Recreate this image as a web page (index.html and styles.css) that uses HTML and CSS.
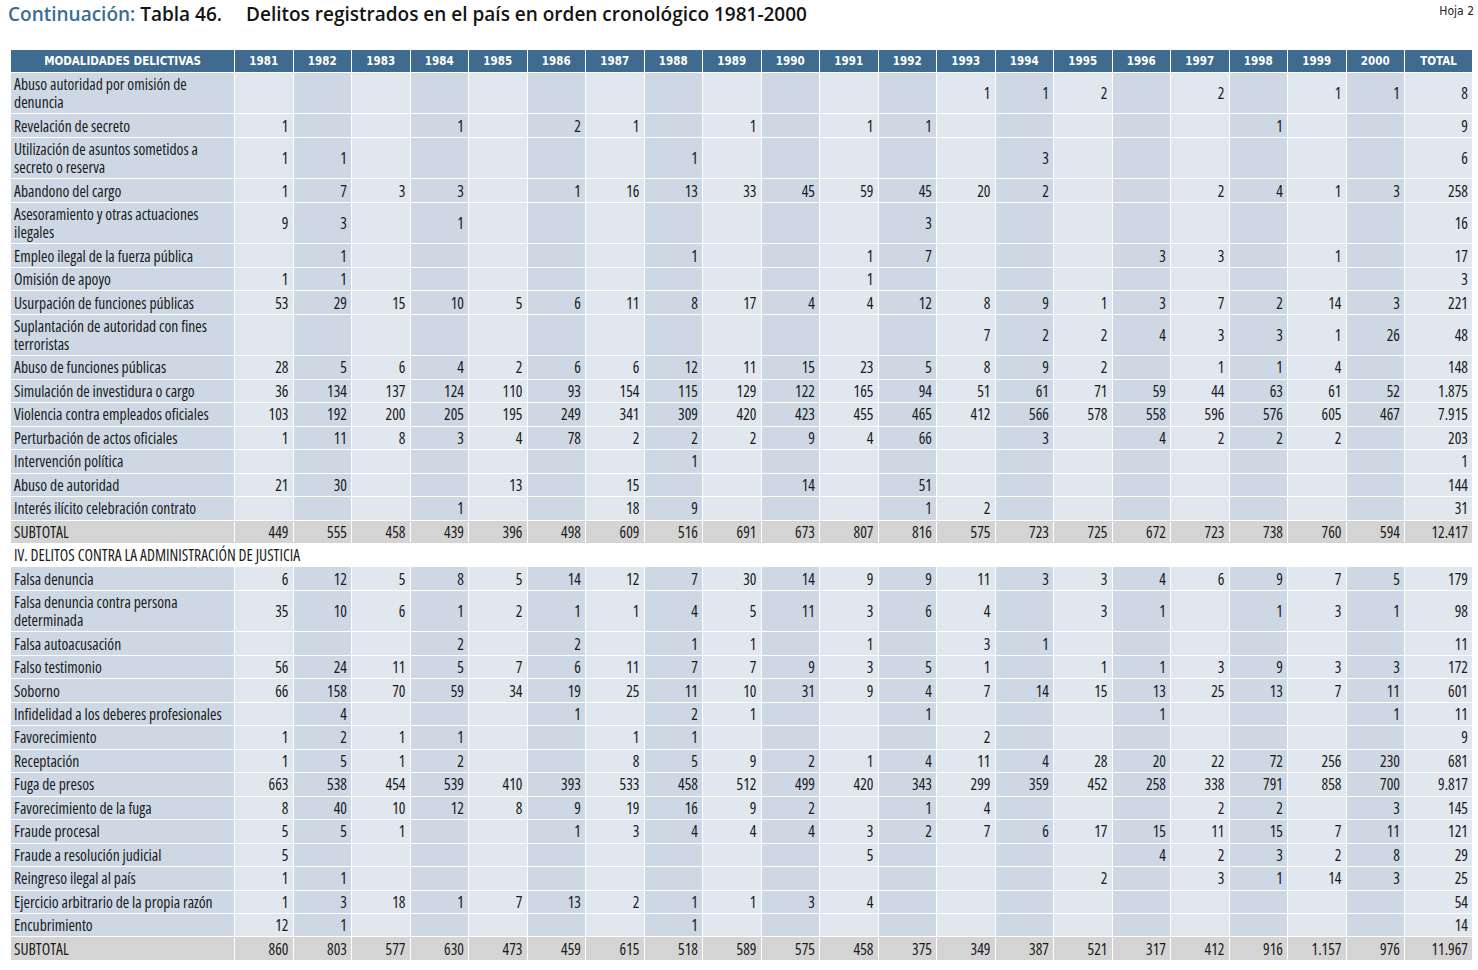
FILE: index.html
```html
<!DOCTYPE html>
<html lang="es">
<head>
<meta charset="utf-8">
<title>Tabla 46</title>
<link rel="stylesheet" href="styles.css">
</head>
<body>
<div class="top">
  <h1 class="title"><span class="cont">Continuación:</span> Tabla 46.<span class="gap"></span>Delitos registrados en el país en orden cronológico 1981-2000</h1>
  <div class="hoja">Hoja 2</div>
</div>
<table class="data">
  <colgroup>
    <col class="c-lbl"><col class="c-l"><col class="c-d"><col class="c-l"><col class="c-d"><col class="c-l"><col class="c-d"><col class="c-l"><col class="c-d"><col class="c-l"><col class="c-d"><col class="c-l"><col class="c-d"><col class="c-l"><col class="c-d"><col class="c-l"><col class="c-d"><col class="c-l"><col class="c-d"><col class="c-l"><col class="c-d"><col class="c-tot">
  </colgroup>
  <thead>
    <tr class="head"><th>MODALIDADES DELICTIVAS</th><th>1981</th><th>1982</th><th>1983</th><th>1984</th><th>1985</th><th>1986</th><th>1987</th><th>1988</th><th>1989</th><th>1990</th><th>1991</th><th>1992</th><th>1993</th><th>1994</th><th>1995</th><th>1996</th><th>1997</th><th>1998</th><th>1999</th><th>2000</th><th>TOTAL</th></tr>
  </thead>
  <tbody>
    <tr><td class="lbl">Abuso autoridad por omisión de denuncia</td><td></td><td></td><td></td><td></td><td></td><td></td><td></td><td></td><td></td><td></td><td></td><td></td><td>1</td><td>1</td><td>2</td><td></td><td>2</td><td></td><td>1</td><td>1</td><td>8</td></tr>
    <tr><td class="lbl">Revelación de secreto</td><td>1</td><td></td><td></td><td>1</td><td></td><td>2</td><td>1</td><td></td><td>1</td><td></td><td>1</td><td>1</td><td></td><td></td><td></td><td></td><td></td><td>1</td><td></td><td></td><td>9</td></tr>
    <tr><td class="lbl">Utilización de asuntos sometidos a secreto o reserva</td><td>1</td><td>1</td><td></td><td></td><td></td><td></td><td></td><td>1</td><td></td><td></td><td></td><td></td><td></td><td>3</td><td></td><td></td><td></td><td></td><td></td><td></td><td>6</td></tr>
    <tr><td class="lbl">Abandono del cargo</td><td>1</td><td>7</td><td>3</td><td>3</td><td></td><td>1</td><td>16</td><td>13</td><td>33</td><td>45</td><td>59</td><td>45</td><td>20</td><td>2</td><td></td><td></td><td>2</td><td>4</td><td>1</td><td>3</td><td>258</td></tr>
    <tr><td class="lbl">Asesoramiento y otras actuaciones ilegales</td><td>9</td><td>3</td><td></td><td>1</td><td></td><td></td><td></td><td></td><td></td><td></td><td></td><td>3</td><td></td><td></td><td></td><td></td><td></td><td></td><td></td><td></td><td>16</td></tr>
    <tr><td class="lbl">Empleo ilegal de la fuerza pública</td><td></td><td>1</td><td></td><td></td><td></td><td></td><td></td><td>1</td><td></td><td></td><td>1</td><td>7</td><td></td><td></td><td></td><td>3</td><td>3</td><td></td><td>1</td><td></td><td>17</td></tr>
    <tr><td class="lbl">Omisión de apoyo</td><td>1</td><td>1</td><td></td><td></td><td></td><td></td><td></td><td></td><td></td><td></td><td>1</td><td></td><td></td><td></td><td></td><td></td><td></td><td></td><td></td><td></td><td>3</td></tr>
    <tr><td class="lbl">Usurpación de funciones públicas</td><td>53</td><td>29</td><td>15</td><td>10</td><td>5</td><td>6</td><td>11</td><td>8</td><td>17</td><td>4</td><td>4</td><td>12</td><td>8</td><td>9</td><td>1</td><td>3</td><td>7</td><td>2</td><td>14</td><td>3</td><td>221</td></tr>
    <tr><td class="lbl">Suplantación de autoridad con fines terroristas</td><td></td><td></td><td></td><td></td><td></td><td></td><td></td><td></td><td></td><td></td><td></td><td></td><td>7</td><td>2</td><td>2</td><td>4</td><td>3</td><td>3</td><td>1</td><td>26</td><td>48</td></tr>
    <tr><td class="lbl">Abuso de funciones públicas</td><td>28</td><td>5</td><td>6</td><td>4</td><td>2</td><td>6</td><td>6</td><td>12</td><td>11</td><td>15</td><td>23</td><td>5</td><td>8</td><td>9</td><td>2</td><td></td><td>1</td><td>1</td><td>4</td><td></td><td>148</td></tr>
    <tr><td class="lbl">Simulación de investidura o cargo</td><td>36</td><td>134</td><td>137</td><td>124</td><td>110</td><td>93</td><td>154</td><td>115</td><td>129</td><td>122</td><td>165</td><td>94</td><td>51</td><td>61</td><td>71</td><td>59</td><td>44</td><td>63</td><td>61</td><td>52</td><td>1.875</td></tr>
    <tr><td class="lbl">Violencia contra empleados oficiales</td><td>103</td><td>192</td><td>200</td><td>205</td><td>195</td><td>249</td><td>341</td><td>309</td><td>420</td><td>423</td><td>455</td><td>465</td><td>412</td><td>566</td><td>578</td><td>558</td><td>596</td><td>576</td><td>605</td><td>467</td><td>7.915</td></tr>
    <tr><td class="lbl">Perturbación de actos oficiales</td><td>1</td><td>11</td><td>8</td><td>3</td><td>4</td><td>78</td><td>2</td><td>2</td><td>2</td><td>9</td><td>4</td><td>66</td><td></td><td>3</td><td></td><td>4</td><td>2</td><td>2</td><td>2</td><td></td><td>203</td></tr>
    <tr><td class="lbl">Intervención política</td><td></td><td></td><td></td><td></td><td></td><td></td><td></td><td>1</td><td></td><td></td><td></td><td></td><td></td><td></td><td></td><td></td><td></td><td></td><td></td><td></td><td>1</td></tr>
    <tr><td class="lbl">Abuso de autoridad</td><td>21</td><td>30</td><td></td><td></td><td>13</td><td></td><td>15</td><td></td><td></td><td>14</td><td></td><td>51</td><td></td><td></td><td></td><td></td><td></td><td></td><td></td><td></td><td>144</td></tr>
    <tr><td class="lbl">Interés ilícito celebración contrato</td><td></td><td></td><td></td><td>1</td><td></td><td></td><td>18</td><td>9</td><td></td><td></td><td></td><td>1</td><td>2</td><td></td><td></td><td></td><td></td><td></td><td></td><td></td><td>31</td></tr>
    <tr class="subtotal"><td class="lbl">SUBTOTAL</td><td>449</td><td>555</td><td>458</td><td>439</td><td>396</td><td>498</td><td>609</td><td>516</td><td>691</td><td>673</td><td>807</td><td>816</td><td>575</td><td>723</td><td>725</td><td>672</td><td>723</td><td>738</td><td>760</td><td>594</td><td>12.417</td></tr>
    <tr class="section"><td class="lbl" colspan="22">IV. DELITOS CONTRA LA ADMINISTRACIÓN DE JUSTICIA</td></tr>
    <tr><td class="lbl">Falsa denuncia</td><td>6</td><td>12</td><td>5</td><td>8</td><td>5</td><td>14</td><td>12</td><td>7</td><td>30</td><td>14</td><td>9</td><td>9</td><td>11</td><td>3</td><td>3</td><td>4</td><td>6</td><td>9</td><td>7</td><td>5</td><td>179</td></tr>
    <tr><td class="lbl">Falsa denuncia contra persona determinada</td><td>35</td><td>10</td><td>6</td><td>1</td><td>2</td><td>1</td><td>1</td><td>4</td><td>5</td><td>11</td><td>3</td><td>6</td><td>4</td><td></td><td>3</td><td>1</td><td></td><td>1</td><td>3</td><td>1</td><td>98</td></tr>
    <tr><td class="lbl">Falsa autoacusación</td><td></td><td></td><td></td><td>2</td><td></td><td>2</td><td></td><td>1</td><td>1</td><td></td><td>1</td><td></td><td>3</td><td>1</td><td></td><td></td><td></td><td></td><td></td><td></td><td>11</td></tr>
    <tr><td class="lbl">Falso testimonio</td><td>56</td><td>24</td><td>11</td><td>5</td><td>7</td><td>6</td><td>11</td><td>7</td><td>7</td><td>9</td><td>3</td><td>5</td><td>1</td><td></td><td>1</td><td>1</td><td>3</td><td>9</td><td>3</td><td>3</td><td>172</td></tr>
    <tr><td class="lbl">Soborno</td><td>66</td><td>158</td><td>70</td><td>59</td><td>34</td><td>19</td><td>25</td><td>11</td><td>10</td><td>31</td><td>9</td><td>4</td><td>7</td><td>14</td><td>15</td><td>13</td><td>25</td><td>13</td><td>7</td><td>11</td><td>601</td></tr>
    <tr><td class="lbl">Infidelidad a los deberes profesionales</td><td></td><td>4</td><td></td><td></td><td></td><td>1</td><td></td><td>2</td><td>1</td><td></td><td></td><td>1</td><td></td><td></td><td></td><td>1</td><td></td><td></td><td></td><td>1</td><td>11</td></tr>
    <tr><td class="lbl">Favorecimiento</td><td>1</td><td>2</td><td>1</td><td>1</td><td></td><td></td><td>1</td><td>1</td><td></td><td></td><td></td><td></td><td>2</td><td></td><td></td><td></td><td></td><td></td><td></td><td></td><td>9</td></tr>
    <tr><td class="lbl">Receptación</td><td>1</td><td>5</td><td>1</td><td>2</td><td></td><td></td><td>8</td><td>5</td><td>9</td><td>2</td><td>1</td><td>4</td><td>11</td><td>4</td><td>28</td><td>20</td><td>22</td><td>72</td><td>256</td><td>230</td><td>681</td></tr>
    <tr><td class="lbl">Fuga de presos</td><td>663</td><td>538</td><td>454</td><td>539</td><td>410</td><td>393</td><td>533</td><td>458</td><td>512</td><td>499</td><td>420</td><td>343</td><td>299</td><td>359</td><td>452</td><td>258</td><td>338</td><td>791</td><td>858</td><td>700</td><td>9.817</td></tr>
    <tr><td class="lbl">Favorecimiento de la fuga</td><td>8</td><td>40</td><td>10</td><td>12</td><td>8</td><td>9</td><td>19</td><td>16</td><td>9</td><td>2</td><td></td><td>1</td><td>4</td><td></td><td></td><td></td><td>2</td><td>2</td><td></td><td>3</td><td>145</td></tr>
    <tr><td class="lbl">Fraude procesal</td><td>5</td><td>5</td><td>1</td><td></td><td></td><td>1</td><td>3</td><td>4</td><td>4</td><td>4</td><td>3</td><td>2</td><td>7</td><td>6</td><td>17</td><td>15</td><td>11</td><td>15</td><td>7</td><td>11</td><td>121</td></tr>
    <tr><td class="lbl">Fraude a resolución judicial</td><td>5</td><td></td><td></td><td></td><td></td><td></td><td></td><td></td><td></td><td></td><td>5</td><td></td><td></td><td></td><td></td><td>4</td><td>2</td><td>3</td><td>2</td><td>8</td><td>29</td></tr>
    <tr><td class="lbl">Reingreso ilegal al país</td><td>1</td><td>1</td><td></td><td></td><td></td><td></td><td></td><td></td><td></td><td></td><td></td><td></td><td></td><td></td><td>2</td><td></td><td>3</td><td>1</td><td>14</td><td>3</td><td>25</td></tr>
    <tr><td class="lbl">Ejercicio arbitrario de la propia razón</td><td>1</td><td>3</td><td>18</td><td>1</td><td>7</td><td>13</td><td>2</td><td>1</td><td>1</td><td>3</td><td>4</td><td></td><td></td><td></td><td></td><td></td><td></td><td></td><td></td><td></td><td>54</td></tr>
    <tr><td class="lbl">Encubrimiento</td><td>12</td><td>1</td><td></td><td></td><td></td><td></td><td></td><td>1</td><td></td><td></td><td></td><td></td><td></td><td></td><td></td><td></td><td></td><td></td><td></td><td></td><td>14</td></tr>
    <tr class="subtotal"><td class="lbl">SUBTOTAL</td><td>860</td><td>803</td><td>577</td><td>630</td><td>473</td><td>459</td><td>615</td><td>518</td><td>589</td><td>575</td><td>458</td><td>375</td><td>349</td><td>387</td><td>521</td><td>317</td><td>412</td><td>916</td><td>1.157</td><td>976</td><td>11.967</td></tr>
  </tbody>
</table>
</body>
</html>
```
FILE: styles.css
```css
html, body {
  margin: 0;
  padding: 0;
  background: #ffffff;
}
body {
  font-family: "Open Sans", "DejaVu Sans Condensed", sans-serif;
  font-stretch: 75%;
  color: #1a1a1a;
}
.top {
  display: flex;
  justify-content: space-between;
  align-items: flex-start;
  height: 50px;
  padding: 0 4px 0 8px;
  box-sizing: border-box;
}
.title {
  margin: 1px 0 0 0;
  font-family: "Open Sans", "DejaVu Sans", sans-serif;
  font-stretch: 100%;
  font-weight: 600;
  font-size: 19px;
  line-height: 26px;
  color: #141414;
}
.cont {
  color: #3a6d95;
}
.gap {
  display: inline-block;
  width: 24px;
}
.hoja {
  margin-top: 4px;
  font-family: "DejaVu Sans Condensed", "DejaVu Sans", sans-serif;
  font-stretch: 100%;
  font-size: 12px;
  color: #222;
}
.data {
  margin-left: 10px;
  border-collapse: collapse;
  table-layout: fixed;
  width: 1462px;
}
.c-lbl { width: 224px; background: #cdd8e4; }
.c-l { width: 58.5px; background: #e1e7ef; }
.c-d { width: 58.5px; background: #cdd8e4; }
.c-tot { width: 68px; background: #e1e7ef; }
.data th {
  background: #3e6b8f;
  color: #ffffff;
  font-family: "DejaVu Sans Condensed", "DejaVu Sans", sans-serif;
  font-stretch: 100%;
  font-weight: bold;
  font-size: 11.5px;
  height: 22px;
  padding: 0;
  text-align: center;
  border: 1px solid #ffffff;
  border-top: none;
}
.data td {
  border: 1px solid #ffffff;
  padding: 2.24px 4px;
  font-size: 15.6px;
  font-weight: 400;
  line-height: 18px;
  text-align: right;
  vertical-align: middle;
}
.data td.lbl {
  text-align: left;
  padding-left: 3px;
  padding-right: 2px;
}
.data tr.subtotal {
  background: #d4d4d4;
}
.data tr.section {
  background: #ffffff;
}
```
